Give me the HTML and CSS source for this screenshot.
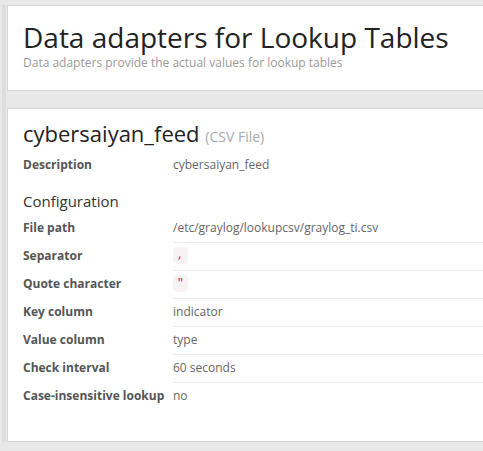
FILE: index.html
```html
<!DOCTYPE html>
<html>
<head>
<meta charset="utf-8">
<link rel="stylesheet" href="styles.css">
</head>
<body>
<div class="page">
  <div class="gutter">
    <div class="box header-box">
      <h1 class="page-title">Data adapters for Lookup Tables</h1>
      <p class="page-desc">Data adapters provide the actual values for lookup tables</p>
    </div>
    <div class="box detail-box">
      <h2 class="adapter-title">cybersaiyan_feed <small class="adapter-type">(CSV File)</small></h2>
      <dl class="deflist desc-list">
        <dt>Description</dt>
        <dd>cybersaiyan_feed</dd>
      </dl>
      <h3 class="config-title">Configuration</h3>
      <dl class="deflist config-list">
        <dt>File path</dt>
        <dd>/etc/graylog/lookupcsv/graylog_ti.csv</dd>
        <dt>Separator</dt>
        <dd><code class="code">,</code></dd>
        <dt>Quote character</dt>
        <dd><code class="code">"</code></dd>
        <dt>Key column</dt>
        <dd>indicator</dd>
        <dt>Value column</dt>
        <dd>type</dd>
        <dt>Check interval</dt>
        <dd>60 seconds</dd>
        <dt>Case-insensitive lookup</dt>
        <dd class="last">no</dd>
      </dl>
    </div>
  </div>
</div>
</body>
</html>
```

FILE: styles.css
```css
html, body {
  margin: 0;
  padding: 0;
  overflow: hidden;
  background: #e8e8e8;
}
body {
  font-family: "Open Sans", "DejaVu Sans", sans-serif;
  font-size: 12px;
  color: #666;
}
.page {
  padding: 5px 0 0 2px;
}
.gutter {
  border-left: 4px solid #dedede;
  padding-left: 1px;
}
.box {
  background: #fff;
  border: 1px solid #d6d6d6;
  padding: 14px 15px;
  margin-right: -40px;
}
.header-box {
  padding-top: 16px;
  padding-bottom: 17px;
  margin-bottom: 17px;
}
.page-title {
  margin: 0;
  font-size: 28px;
  font-weight: 400;
  line-height: 31px;
  color: #222;
}
.page-desc {
  margin: 0;
  font-size: 12px;
  line-height: 20px;
  color: #999;
}
.detail-box {
  padding-top: 12px;
  padding-bottom: 31px;
}
.adapter-title {
  margin: 0 0 6px;
  font-size: 22px;
  font-weight: 400;
  line-height: 24px;
  color: #222;
}
.adapter-type {
  font-size: 14px;
  color: #aaa;
}
.deflist {
  margin: 0;
  display: grid;
  grid-template-columns: 150px 1fr;
}
.deflist dt {
  font-weight: 700;
  color: #555;
  line-height: 20px;
  height: 20px;
  padding: 3px 0 4px;
}
.deflist dd {
  margin: 0;
  line-height: 20px;
  height: 20px;
  padding: 3px 0 4px;
  color: #666;
}
.desc-list dt, .desc-list dd {
  padding: 0;
}
.config-list dd {
  border-bottom: 1px solid #eee;
}
.config-list dd.last {
  border-bottom: none;
}
.config-title {
  margin: 18px 0 5px;
  font-size: 15px;
  font-weight: 400;
  line-height: 17px;
  color: #333;
}
.code {
  display: inline-block;
  vertical-align: top;
  margin-top: 1px;
  height: 17px;
  line-height: 17px;
  font-family: "Liberation Mono", "DejaVu Sans Mono", monospace;
  font-size: 11px;
  padding: 0 4px;
  background: #f9f2f4;
  color: #c7254e;
  border-radius: 4px;
}
```
